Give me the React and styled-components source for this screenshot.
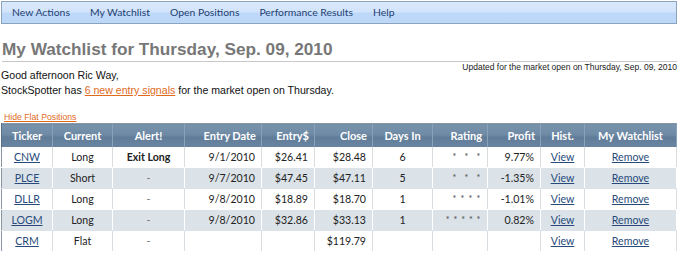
import React from "react";
import styled, { createGlobalStyle, css } from "styled-components";

const Global = createGlobalStyle`
  html, body { margin: 0; padding: 0; background: #fff; overflow: hidden; }
  body { font-family: "Liberation Sans", Arial, sans-serif; }
`;

const Page = styled.div`
  width: 678px;
  padding: 1px 1px 0 1px;
  box-sizing: border-box;
`;

const Nav = styled.nav`
  display: flex;
  height: 21px;
  align-items: center;
  padding-left: 0;
  border: 1px solid #8ba3bd;
  background: linear-gradient(#d9e8fb 0%, #d2e4fb 48%, #bdd8f8 52%, #bcd7f8 100%);
`;

const NavItem = styled.a`
  font-family: Lato, "Open Sans", sans-serif;
  font-size: 10.4px;
  color: #1f3f73;
  padding: 0 10px;
  text-decoration: none;
  line-height: 21px;
`;

const Title = styled.h1`
  margin: 15px 0 0 1px;
  font-family: "Liberation Sans", Arial, sans-serif;
  font-size: 17.2px;
  font-weight: bold;
  color: #777;
  line-height: 20px;
  padding-bottom: 2px;
  border-bottom: 1px solid #c8c8c8;
`;

const Updated = styled.div`
  float: right;
  font-size: 8.5px;
  color: #222;
  line-height: 11px;
`;

const Greeting = styled.div`
  font-size: 10.6px;
  color: #111;
  line-height: 15px;
  padding-top: 6px;
`;

const OrangeLink = styled.a`
  color: #e06a1c;
  text-decoration: underline;
`;

const HideRow = styled.div`
  clear: both;
  margin: 13px 0 0 3px;
  font-size: 8.7px;
  line-height: 12px;
`;

const Table = styled.table`
  width: 676px;
  border-collapse: collapse;
  table-layout: fixed;
  border: 1px solid #8797a8;
  font-family: Lato, "Open Sans", sans-serif;
  font-size: 10.6px;
`;

const Th = styled.th`
  height: 23px;
  padding: 0 5px;
  color: #fff;
  font-size: 11px;
  font-weight: bold;
  text-align: ${(p) => p.$align || "center"};
  background: linear-gradient(#7993ac 0%, #6f8aa5 45%, #5f7c99 55%, #6a85a1 100%);
  border-left: 1px solid #56708b;
  border-right: 1px solid #8aa2b9;
  white-space: nowrap;
  overflow: hidden;
`;

const Tr = styled.tr`
  background: ${(p) => (p.$alt ? "#dbe2e8" : "#ffffff")};
`;

const Td = styled.td`
  height: 20px;
  padding: 0 6px;
  color: #222;
  text-align: ${(p) => p.$align || "center"};
  border-right: 1px solid ${(p) => (p.$alt ? "#ffffff" : "#d8dde2")};
  border-bottom: 1px solid ${(p) => (p.$alt ? "#dbe2e8" : "#fff")};
  white-space: nowrap;
  ${(p) => p.$bold && css`font-weight: bold;`}
  ${(p) => p.$muted && css`color: #777;`}
`;

const TLink = styled.a`
  color: #274a7a;
  text-decoration: underline;
`;

const Stars = styled.span`
  display: inline-flex;
  gap: ${(p) => p.$gap}px;
  margin-right: 1px;
  vertical-align: 1px;
`;

const Star = styled.span`
  display: inline-flex;
  justify-content: center;
  width: 3px;
  font-size: 9px;
  color: #444;
`;

const cols = [
  { label: "Ticker", w: 51, h: "center" },
  { label: "Current", w: 60, h: "center" },
  { label: "Alert!", w: 72, h: "center" },
  { label: "Entry Date", w: 77, h: "right" },
  { label: "Entry$", w: 53, h: "right" },
  { label: "Close", w: 58, h: "right" },
  { label: "Days In", w: 60, h: "center" },
  { label: "Rating", w: 55, h: "right" },
  { label: "Profit", w: 53, h: "right" },
  { label: "Hist.", w: 44, h: "center" },
  { label: "My Watchlist", w: 92, h: "center" },
];

const rows = [
  ["CNW", "Long", "Exit Long", "9/1/2010", "$26.41", "$28.48", "6", 3, "9.77%"],
  ["PLCE", "Short", "-", "9/7/2010", "$47.45", "$47.11", "5", 3, "-1.35%"],
  ["DLLR", "Long", "-", "9/8/2010", "$18.89", "$18.70", "1", 4, "-1.01%"],
  ["LOGM", "Long", "-", "9/8/2010", "$32.86", "$33.13", "1", 5, "0.82%"],
  ["CRM", "Flat", "-", "", "", "$119.79", "", 0, ""],
];

const starGap = { 3: 9, 4: 5, 5: 4.7 };

export default function App() {
  return (
    <Page>
      <Global />
      <Nav>
        <NavItem>New Actions</NavItem>
        <NavItem>My Watchlist</NavItem>
        <NavItem>Open Positions</NavItem>
        <NavItem>Performance Results</NavItem>
        <NavItem>Help</NavItem>
      </Nav>
      <Title>My Watchlist for Thursday, Sep. 09, 2010</Title>
      <Updated>Updated for the market open on Thursday, Sep. 09, 2010</Updated>
      <Greeting>
        Good afternoon Ric Way,
        <br />
        StockSpotter has <OrangeLink>6 new entry signals</OrangeLink> for the market open on Thursday.
      </Greeting>
      <HideRow>
        <OrangeLink>Hide Flat Positions</OrangeLink>
      </HideRow>
      <Table>
        <colgroup>
          {cols.map((c) => (
            <col key={c.label} style={{ width: c.w }} />
          ))}
        </colgroup>
        <thead>
          <tr>
            {cols.map((c) => (
              <Th key={c.label} $align={c.h}>
                {c.label}
              </Th>
            ))}
          </tr>
        </thead>
        <tbody>
          {rows.map((r, i) => {
            const alt = i % 2 === 1;
            return (
              <Tr key={r[0]} $alt={alt}>
                <Td $alt={alt}>
                  <TLink>{r[0]}</TLink>
                </Td>
                <Td $alt={alt}>{r[1]}</Td>
                <Td $alt={alt} $bold={r[2] !== "-"} $muted={r[2] === "-"}>
                  {r[2]}
                </Td>
                <Td $alt={alt} $align="right">{r[3]}</Td>
                <Td $alt={alt} $align="right">{r[4]}</Td>
                <Td $alt={alt} $align="right">{r[5]}</Td>
                <Td $alt={alt}>{r[6]}</Td>
                <Td $alt={alt} $align="right">
                  {r[7] > 0 && (
                    <Stars $gap={starGap[r[7]]}>
                      {Array.from({ length: r[7] }, (_, k) => (
                        <Star key={k}>*</Star>
                      ))}
                    </Stars>
                  )}
                </Td>
                <Td $alt={alt} $align="right">{r[8]}</Td>
                <Td $alt={alt}>
                  <TLink>View</TLink>
                </Td>
                <Td $alt={alt}>
                  <TLink>Remove</TLink>
                </Td>
              </Tr>
            );
          })}
        </tbody>
      </Table>
    </Page>
  );
}
